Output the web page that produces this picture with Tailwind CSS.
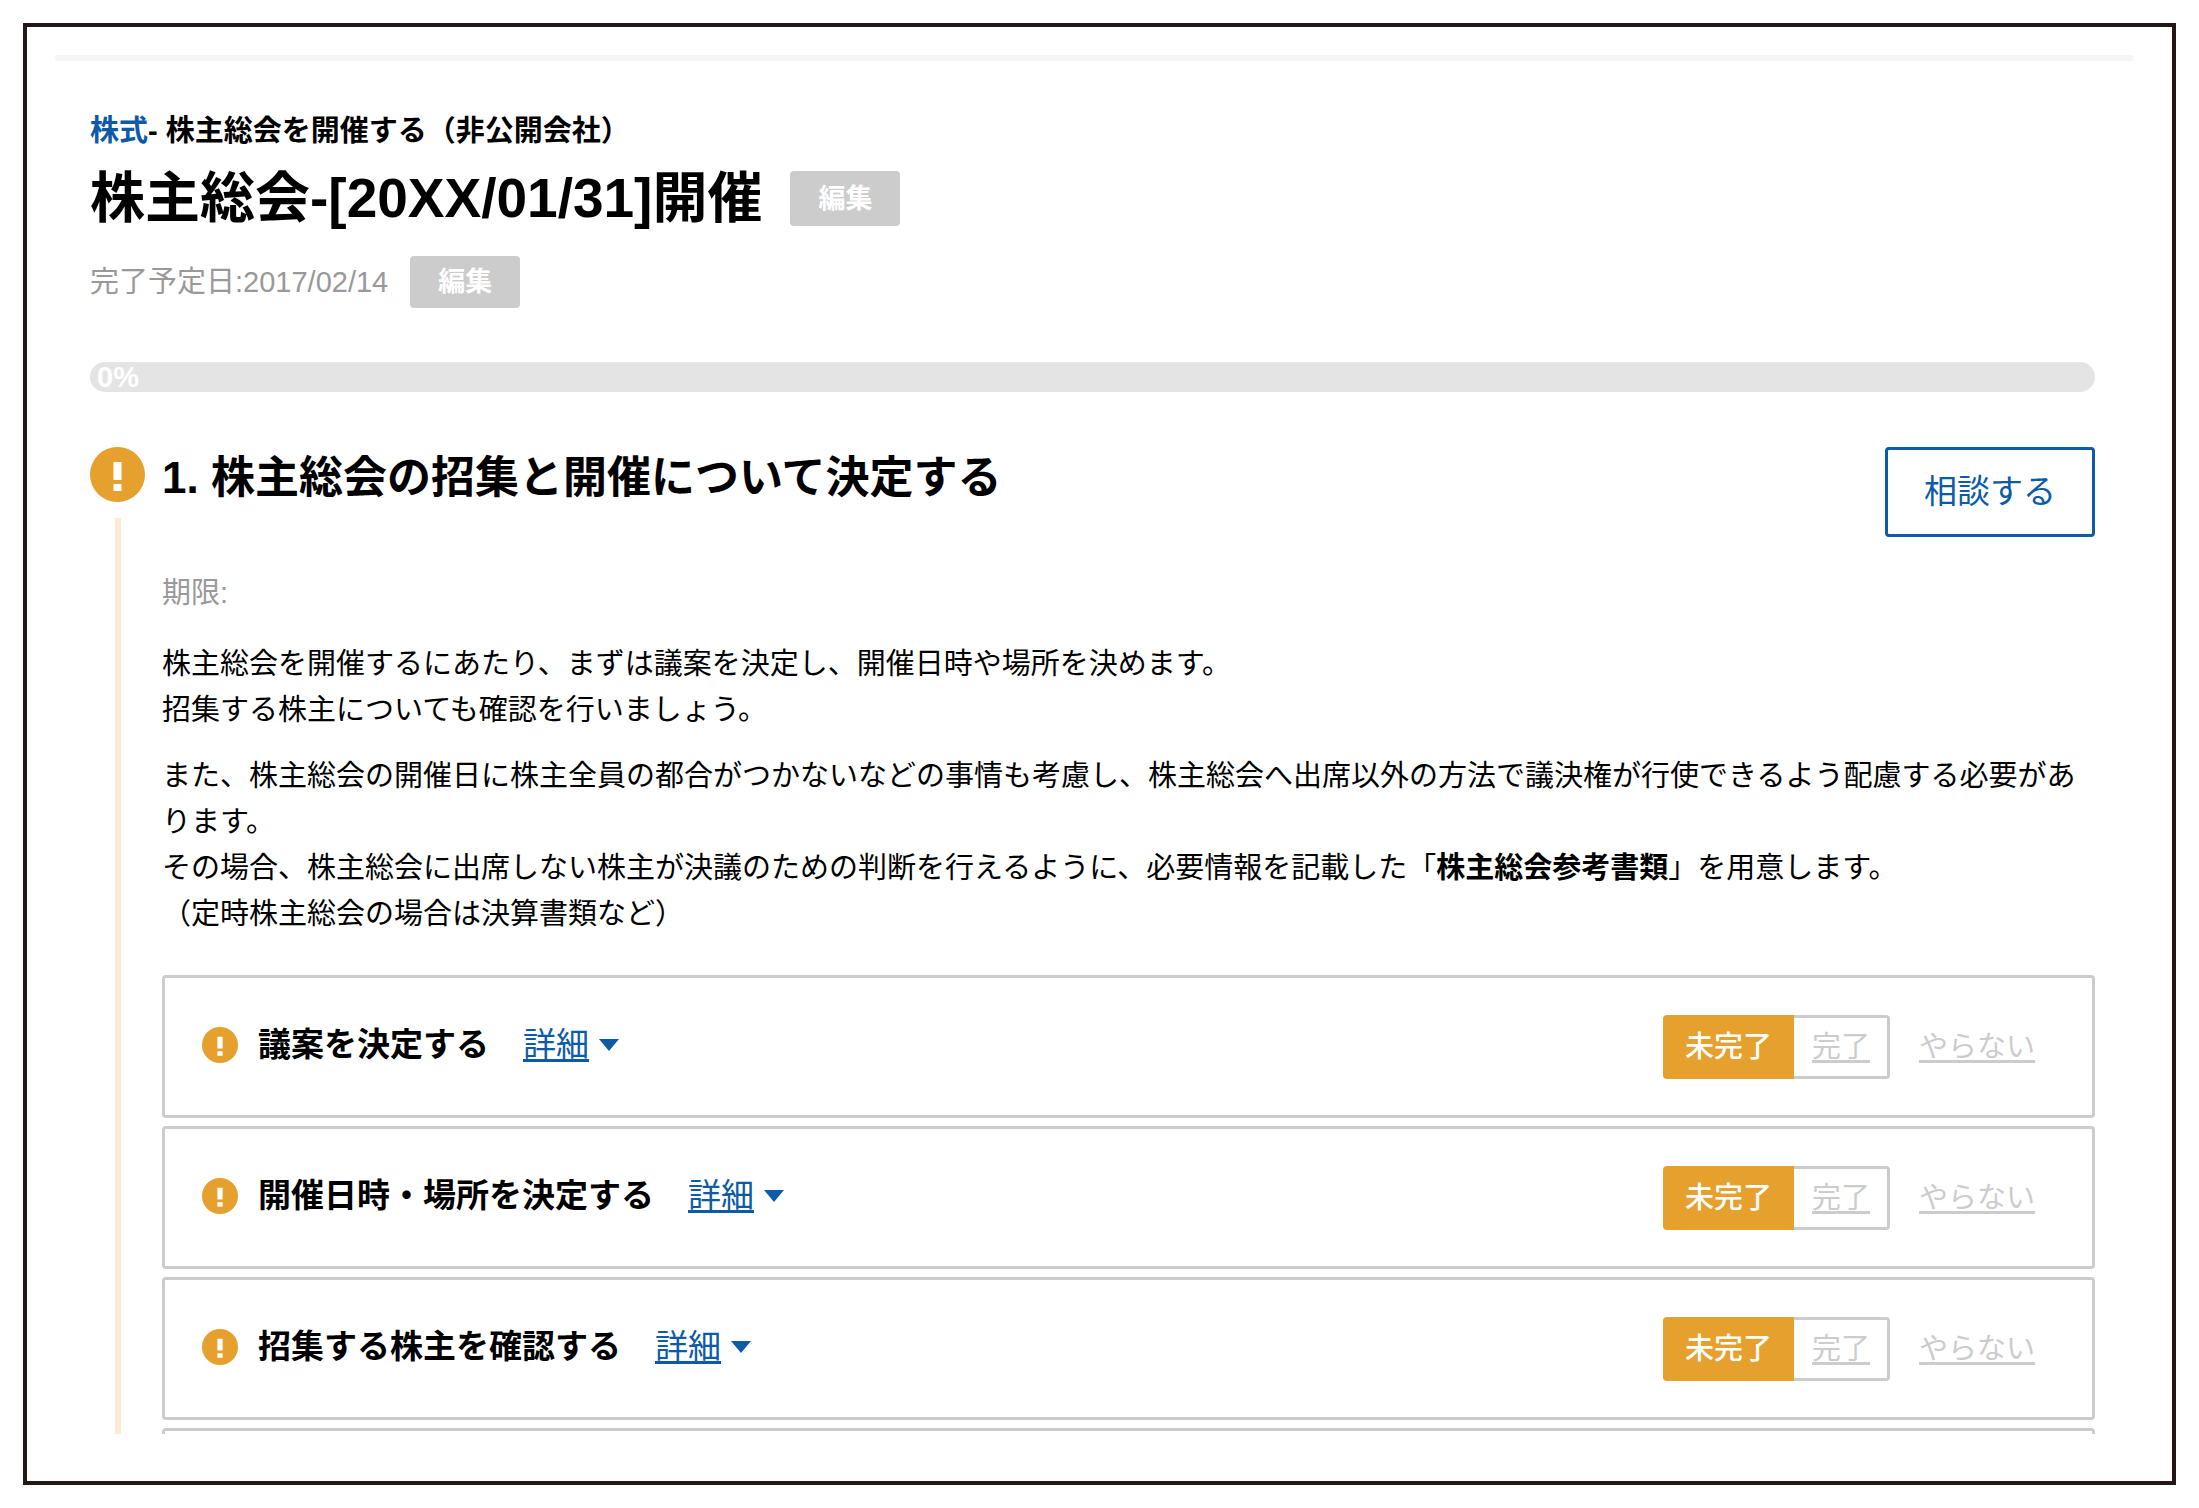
<!DOCTYPE html>
<html lang="ja">
    <head>
        <meta charset="UTF-8" />
        <meta name="viewport" content="width=device-width, initial-scale=1.0" />
        <title>株主総会-[20XX/01/31]開催</title>
        <script src="https://cdn.jsdelivr.net/npm/@tailwindcss/browser@4"></script>
    </head>
    <body class="flex min-h-screen flex-col bg-white px-[23px] py-[23px] font-['Liberation_Sans','Noto_Sans_CJK_JP',sans-serif] text-[29px] leading-[46px] text-black">
        <!-- アイコン定義 -->
        <svg class="hidden">
            <symbol id="icon-alert" viewBox="0 0 55 55">
                <circle cx="27.5" cy="27.5" r="27.5" fill="#e5a02d" />
                <path d="M23.5 15h8v18h-8zM23.5 37h8v7h-8z" fill="#fff" />
            </symbol>
            <symbol id="icon-caret" viewBox="0 0 20 12">
                <path d="M0 0h20L10 12z" fill="currentColor" />
            </symbol>
        </svg>

        <div class="flex-1 border-4 border-[#231815] pt-7 pr-[39px] pb-[46px] pl-7">
            <hr class="h-1.5 border-0 bg-[#f6f6f6]" />

            <main class="pt-[47px] pr-[38px] pl-[35px]">
                <!-- ヘッダー -->
                <header>
                    <p class="font-bold"><a href="#" class="text-[#0d5aa7]">株式</a>- 株主総会を開催する（非公開会社）</p>
                    <div class="mt-[17px] flex items-center gap-7">
                        <h1 class="text-[55px] leading-[55px] font-bold">株主総会-[20XX/01/31]開催</h1>
                        <button type="button" class="h-[55px] rounded-sm bg-[#ccc] px-7 text-[27px] font-bold text-white">編集</button>
                    </div>
                    <div class="mt-[30px] flex items-center gap-[22px]">
                        <p class="text-[#999]">完了予定日:2017/02/14</p>
                        <button type="button" class="h-[52px] rounded-sm bg-[#ccc] px-7 text-[27px] font-bold text-white">編集</button>
                    </div>
                </header>

                <!-- 進捗バー -->
                <div role="progressbar" aria-label="進捗" aria-valuenow="0" aria-valuemin="0" aria-valuemax="100" class="mt-[54px] h-[30px] rounded-full bg-[#e4e4e4] px-[7px] leading-[30px] font-bold text-white">0%</div>

                <section class="mt-[55px] flex gap-[17px]">
                    <div class="flex shrink-0 flex-col items-center">
                        <svg class="size-[55px]" aria-hidden="true"><use href="#icon-alert" /></svg>
                        <div class="mt-4 w-1.5 flex-1 bg-[#faebd4]"></div>
                    </div>

                    <div class="flex-1">
                        <div class="flex items-start justify-between">
                            <h2 class="text-[44px] leading-[61px] font-bold">1. 株主総会の招集と開催について決定する</h2>
                            <button type="button" class="h-[90px] rounded-sm border-3 border-[#0d5aa7] px-9 text-[33px] text-[#0d5aa7]">相談する</button>
                        </div>

                        <p class="mt-[33px] text-[#999]">期限:</p>
                        <p class="mt-[25px]">
                            株主総会を開催するにあたり、まずは議案を決定し、開催日時や場所を決めます。<br />
                            招集する株主についても確認を行いましょう。
                        </p>
                        <p class="mt-5">
                            また、株主総会の開催日に株主全員の都合がつかないなどの事情も考慮し、株主総会へ出席以外の方法で議決権が行使できるよう配慮する必要があります。<br />
                            その場合、株主総会に出席しない株主が決議のための判断を行えるように、必要情報を記載した「<strong>株主総会参考書類</strong>」を用意します。<br />
                            （定時株主総会の場合は決算書類など）
                        </p>

                        <!-- タスク一覧 -->
                        <ul class="mt-[38px] flex flex-col gap-2">
                            <li class="flex min-h-[143px] items-center rounded-sm border-3 border-[#ccc] pr-[57px] pl-[37px]">
                                <div class="flex items-center pb-1">
                                    <svg class="size-9" aria-hidden="true"><use href="#icon-alert" /></svg>
                                    <h3 class="ml-5 text-[33px] font-bold">議案を決定する</h3>
                                    <a href="#" class="ml-[34px] flex items-center gap-2.5 text-[33px] text-[#0d5aa7]">
                                        <span class="underline decoration-3 underline-offset-3">詳細</span>
                                        <svg class="h-3 w-5" aria-hidden="true"><use href="#icon-caret" /></svg>
                                    </a>
                                </div>
                                <div class="ml-auto flex h-16">
                                    <button type="button" class="rounded-l-sm bg-[#e5a02d] px-[22px] font-medium text-white">未完了</button>
                                    <button type="button" class="rounded-r-sm border-3 border-l-0 border-[#ccc] pr-[17px] pl-[18px] text-[#ccc] underline decoration-3 underline-offset-3">完了</button>
                                </div>
                                <button type="button" class="ml-[29px] text-[#ccc] underline decoration-3 underline-offset-3">やらない</button>
                            </li>
                            <li class="flex min-h-[143px] items-center rounded-sm border-3 border-[#ccc] pr-[57px] pl-[37px]">
                                <div class="flex items-center pb-1">
                                    <svg class="size-9" aria-hidden="true"><use href="#icon-alert" /></svg>
                                    <h3 class="ml-5 text-[33px] font-bold">開催日時・場所を決定する</h3>
                                    <a href="#" class="ml-[34px] flex items-center gap-2.5 text-[33px] text-[#0d5aa7]">
                                        <span class="underline decoration-3 underline-offset-3">詳細</span>
                                        <svg class="h-3 w-5" aria-hidden="true"><use href="#icon-caret" /></svg>
                                    </a>
                                </div>
                                <div class="ml-auto flex h-16">
                                    <button type="button" class="rounded-l-sm bg-[#e5a02d] px-[22px] font-medium text-white">未完了</button>
                                    <button type="button" class="rounded-r-sm border-3 border-l-0 border-[#ccc] pr-[17px] pl-[18px] text-[#ccc] underline decoration-3 underline-offset-3">完了</button>
                                </div>
                                <button type="button" class="ml-[29px] text-[#ccc] underline decoration-3 underline-offset-3">やらない</button>
                            </li>
                            <li class="flex min-h-[143px] items-center rounded-sm border-3 border-[#ccc] pr-[57px] pl-[37px]">
                                <div class="flex items-center pb-1">
                                    <svg class="size-9" aria-hidden="true"><use href="#icon-alert" /></svg>
                                    <h3 class="ml-5 text-[33px] font-bold">招集する株主を確認する</h3>
                                    <a href="#" class="ml-[34px] flex items-center gap-2.5 text-[33px] text-[#0d5aa7]">
                                        <span class="underline decoration-3 underline-offset-3">詳細</span>
                                        <svg class="h-3 w-5" aria-hidden="true"><use href="#icon-caret" /></svg>
                                    </a>
                                </div>
                                <div class="ml-auto flex h-16">
                                    <button type="button" class="rounded-l-sm bg-[#e5a02d] px-[22px] font-medium text-white">未完了</button>
                                    <button type="button" class="rounded-r-sm border-3 border-l-0 border-[#ccc] pr-[17px] pl-[18px] text-[#ccc] underline decoration-3 underline-offset-3">完了</button>
                                </div>
                                <button type="button" class="ml-[29px] text-[#ccc] underline decoration-3 underline-offset-3">やらない</button>
                            </li>
                        </ul>
                        <!-- 続きのカードの上端 -->
                        <div class="mt-2 h-1.5 rounded-t-sm border-3 border-b-0 border-[#ccc]"></div>
                    </div>
                </section>
            </main>
        </div>
    </body>
</html>
